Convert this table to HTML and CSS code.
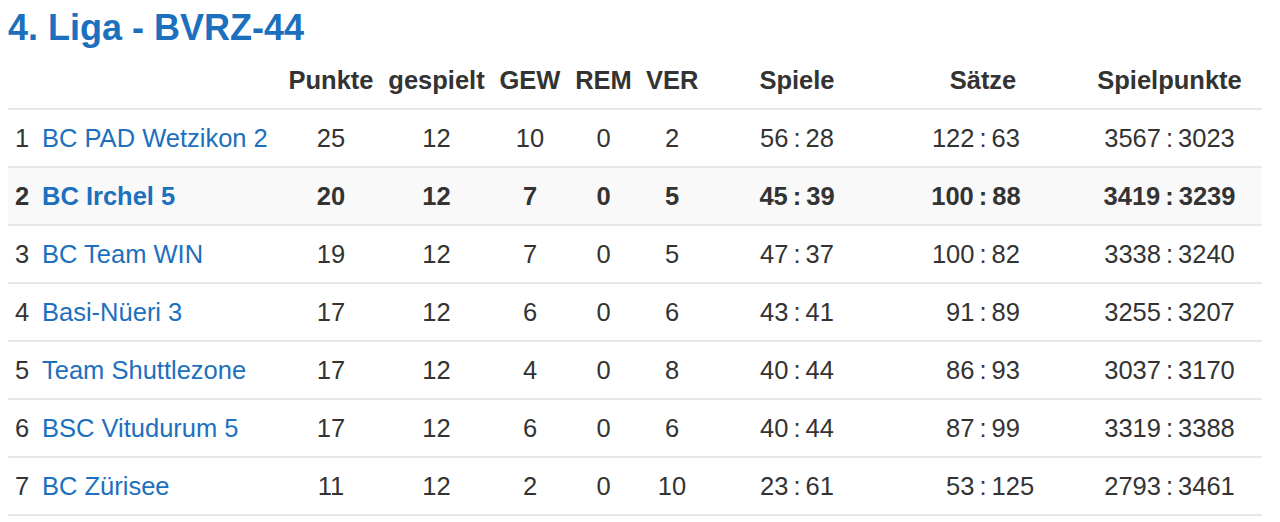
FILE: index.html
```html
<!DOCTYPE html>
<html lang="de">
<head>
<meta charset="utf-8">
<title>4. Liga - BVRZ-44</title>
<link rel="stylesheet" href="styles.css">
</head>
<body>
<h1 class="title">4. Liga - BVRZ-44</h1>
<table class="standings">
  <colgroup>
    <col class="c-rank"><col class="c-name"><col class="c-pts"><col class="c-gp"><col class="c-w"><col class="c-d"><col class="c-l"><col class="c-sp"><col class="c-sets"><col class="c-pp">
  </colgroup>
  <thead>
    <tr>
      <th></th><th></th>
      <th class="num">Punkte</th><th class="num">gespielt</th><th class="num">GEW</th><th class="num">REM</th><th class="num">VER</th>
      <th class="num">Spiele</th><th class="num">Sätze</th><th class="num">Spielpunkte</th>
    </tr>
  </thead>
  <tbody>
    <tr>
      <td>1</td><td><a href="#">BC PAD Wetzikon 2</a></td>
      <td class="num">25</td><td class="num">12</td><td class="num">10</td><td class="num">0</td><td class="num">2</td>
      <td><div class="score"><span class="l">56</span><span class="sep">:</span><span class="r">28</span></div></td>
      <td><div class="score"><span class="l">122</span><span class="sep">:</span><span class="r">63</span></div></td>
      <td><div class="score"><span class="l">3567</span><span class="sep">:</span><span class="r">3023</span></div></td>
    </tr>
    <tr class="own">
      <td>2</td><td><a href="#">BC Irchel 5</a></td>
      <td class="num">20</td><td class="num">12</td><td class="num">7</td><td class="num">0</td><td class="num">5</td>
      <td><div class="score"><span class="l">45</span><span class="sep">:</span><span class="r">39</span></div></td>
      <td><div class="score"><span class="l">100</span><span class="sep">:</span><span class="r">88</span></div></td>
      <td><div class="score"><span class="l">3419</span><span class="sep">:</span><span class="r">3239</span></div></td>
    </tr>
    <tr>
      <td>3</td><td><a href="#">BC Team WIN</a></td>
      <td class="num">19</td><td class="num">12</td><td class="num">7</td><td class="num">0</td><td class="num">5</td>
      <td><div class="score"><span class="l">47</span><span class="sep">:</span><span class="r">37</span></div></td>
      <td><div class="score"><span class="l">100</span><span class="sep">:</span><span class="r">82</span></div></td>
      <td><div class="score"><span class="l">3338</span><span class="sep">:</span><span class="r">3240</span></div></td>
    </tr>
    <tr>
      <td>4</td><td><a href="#">Basi-Nüeri 3</a></td>
      <td class="num">17</td><td class="num">12</td><td class="num">6</td><td class="num">0</td><td class="num">6</td>
      <td><div class="score"><span class="l">43</span><span class="sep">:</span><span class="r">41</span></div></td>
      <td><div class="score"><span class="l">91</span><span class="sep">:</span><span class="r">89</span></div></td>
      <td><div class="score"><span class="l">3255</span><span class="sep">:</span><span class="r">3207</span></div></td>
    </tr>
    <tr>
      <td>5</td><td><a href="#">Team Shuttlezone</a></td>
      <td class="num">17</td><td class="num">12</td><td class="num">4</td><td class="num">0</td><td class="num">8</td>
      <td><div class="score"><span class="l">40</span><span class="sep">:</span><span class="r">44</span></div></td>
      <td><div class="score"><span class="l">86</span><span class="sep">:</span><span class="r">93</span></div></td>
      <td><div class="score"><span class="l">3037</span><span class="sep">:</span><span class="r">3170</span></div></td>
    </tr>
    <tr>
      <td>6</td><td><a href="#">BSC Vitudurum 5</a></td>
      <td class="num">17</td><td class="num">12</td><td class="num">6</td><td class="num">0</td><td class="num">6</td>
      <td><div class="score"><span class="l">40</span><span class="sep">:</span><span class="r">44</span></div></td>
      <td><div class="score"><span class="l">87</span><span class="sep">:</span><span class="r">99</span></div></td>
      <td><div class="score"><span class="l">3319</span><span class="sep">:</span><span class="r">3388</span></div></td>
    </tr>
    <tr>
      <td>7</td><td><a href="#">BC Zürisee</a></td>
      <td class="num">11</td><td class="num">12</td><td class="num">2</td><td class="num">0</td><td class="num">10</td>
      <td><div class="score"><span class="l">23</span><span class="sep">:</span><span class="r">61</span></div></td>
      <td><div class="score"><span class="l">53</span><span class="sep">:</span><span class="r">125</span></div></td>
      <td><div class="score"><span class="l">2793</span><span class="sep">:</span><span class="r">3461</span></div></td>
    </tr>
  </tbody>
</table>
</body>
</html>
```

FILE: styles.css
```css
body {
  margin: 8px;
  font-family: "Liberation Sans", Arial, Helvetica, sans-serif;
  color: #333333;
  background: #ffffff;
}

.title {
  margin: 0;
  font-size: 36px;
  line-height: 40px;
  font-weight: bold;
  color: #1c70bd;
}

.standings {
  margin-top: 4px;
  width: 1254px;
  border-collapse: collapse;
  table-layout: fixed;
  font-size: 25.5px;
}

.c-rank { width: 27px; }
.c-name { width: 246px; }
.c-pts { width: 100px; }
.c-gp { width: 111px; }
.c-w { width: 76px; }
.c-d { width: 71px; }
.c-l { width: 66px; }
.c-sp { width: 184px; }
.c-sets { width: 188px; }
.c-pp { width: 185px; }

.standings th,
.standings td {
  padding: 0 7px;
  height: 56px;
  vertical-align: middle;
  text-align: left;
  white-space: nowrap;
  border-bottom: 2px solid #e8e8e8;
}

.standings th {
  font-weight: bold;
  color: #333333;
}

.standings .num {
  text-align: center;
}

.standings a {
  color: #1c70bd;
  text-decoration: none;
}

.standings tr.own td {
  background: #f9f9f9;
  font-weight: bold;
}

.score {
  display: grid;
  grid-template-columns: 1fr auto 1fr;
}

.score .l { text-align: right; }
.score .r { text-align: left; }
.score .sep { padding: 0 5px; }
```
